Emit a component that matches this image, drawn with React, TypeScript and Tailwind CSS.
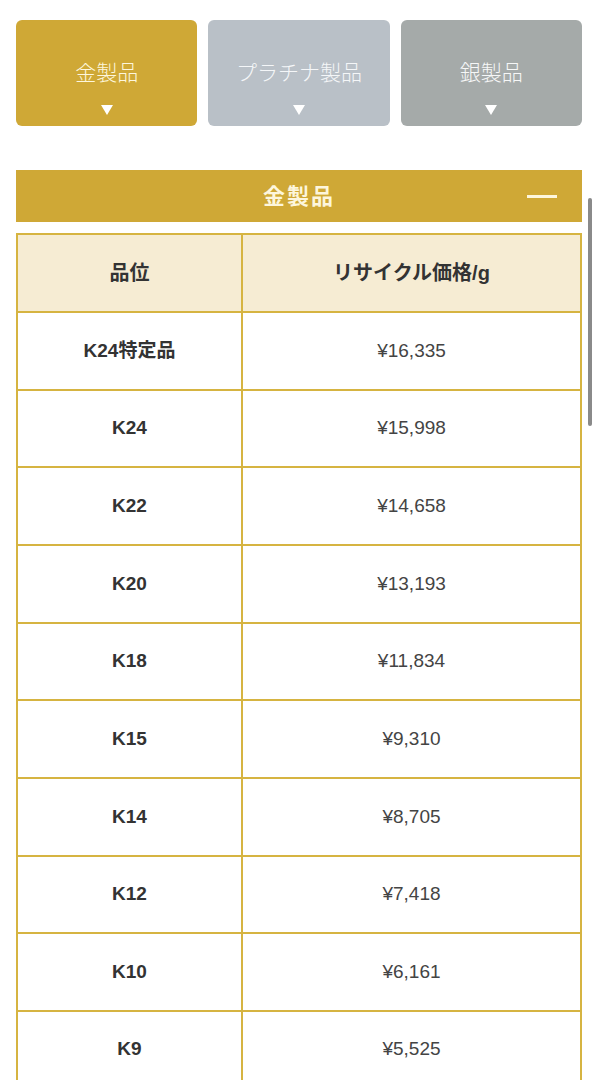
import React from 'react'

const tabs = [
  { label: '金製品', bg: 'bg-[#cfa836]', text: 'text-[#fdf6dc]' },
  { label: 'プラチナ製品', bg: 'bg-[#b9c0c7]', text: 'text-[#f4f6f8]' },
  { label: '銀製品', bg: 'bg-[#a5aaa9]', text: 'text-[#f6f7f7]' },
]

const rows = [
  ['K24特定品', '¥16,335'],
  ['K24', '¥15,998'],
  ['K22', '¥14,658'],
  ['K20', '¥13,193'],
  ['K18', '¥11,834'],
  ['K15', '¥9,310'],
  ['K14', '¥8,705'],
  ['K12', '¥7,418'],
  ['K10', '¥6,161'],
  ['K9', '¥5,525'],
]

export default function App() {
  return (
    <div
      className="relative min-h-screen bg-white px-4 pt-5 pb-10"
      style={{ fontFamily: '"Liberation Sans", "Noto Sans CJK JP", sans-serif' }}
    >
      <div className="grid grid-cols-3 gap-[11px]">
        {tabs.map((t) => (
          <button
            key={t.label}
            className={`${t.bg} ${t.text} h-[106px] rounded-[6px] flex flex-col items-center justify-start pt-[38px]`}
          >
            <span className="text-[21px] font-light leading-[30px]">{t.label}</span>
            <svg width="12" height="10" viewBox="0 0 12 10" className="mt-[17px]">
              <polygon points="0,0 12,0 6,10" fill="#ffffff" />
            </svg>
          </button>
        ))}
      </div>

      <div className="mt-[44px] h-[52px] bg-[#cfa836] flex items-center justify-center relative">
        <span className="text-[22px] font-semibold text-[#fdf6dc] tracking-[2px]">金製品</span>
        <span className="absolute right-[25px] top-[25px] w-[30px] h-[3px] bg-[#fdf6dc]" />
      </div>

      <div className="mt-[11px] border-t-2 border-l-2 border-[#d6b441]">
        <div className="grid grid-cols-[225px_1fr] h-[78px] bg-[#f6ecd3]">
          <div className="border-r-2 border-b-2 border-[#d6b441] flex items-center justify-center text-[20px] font-bold text-[#333]">
            品位
          </div>
          <div className="border-r-2 border-b-2 border-[#d6b441] flex items-center justify-center text-[20px] font-bold text-[#333]">
            リサイクル価格/g
          </div>
        </div>
        {rows.map(([grade, price]) => (
          <div key={grade} className="grid grid-cols-[225px_1fr] h-[77.67px]">
            <div className="border-r-2 border-b-2 border-[#d6b441] flex items-center justify-center text-[19px] font-bold text-[#333]">
              {grade}
            </div>
            <div className="border-r-2 border-b-2 border-[#d6b441] flex items-center justify-center text-[19px] text-[#444]">
              {price}
            </div>
          </div>
        ))}
      </div>

      <div className="absolute left-[588px] top-[198px] w-[4px] h-[228px] rounded-full bg-[#8a8a8a]" />
    </div>
  )
}
